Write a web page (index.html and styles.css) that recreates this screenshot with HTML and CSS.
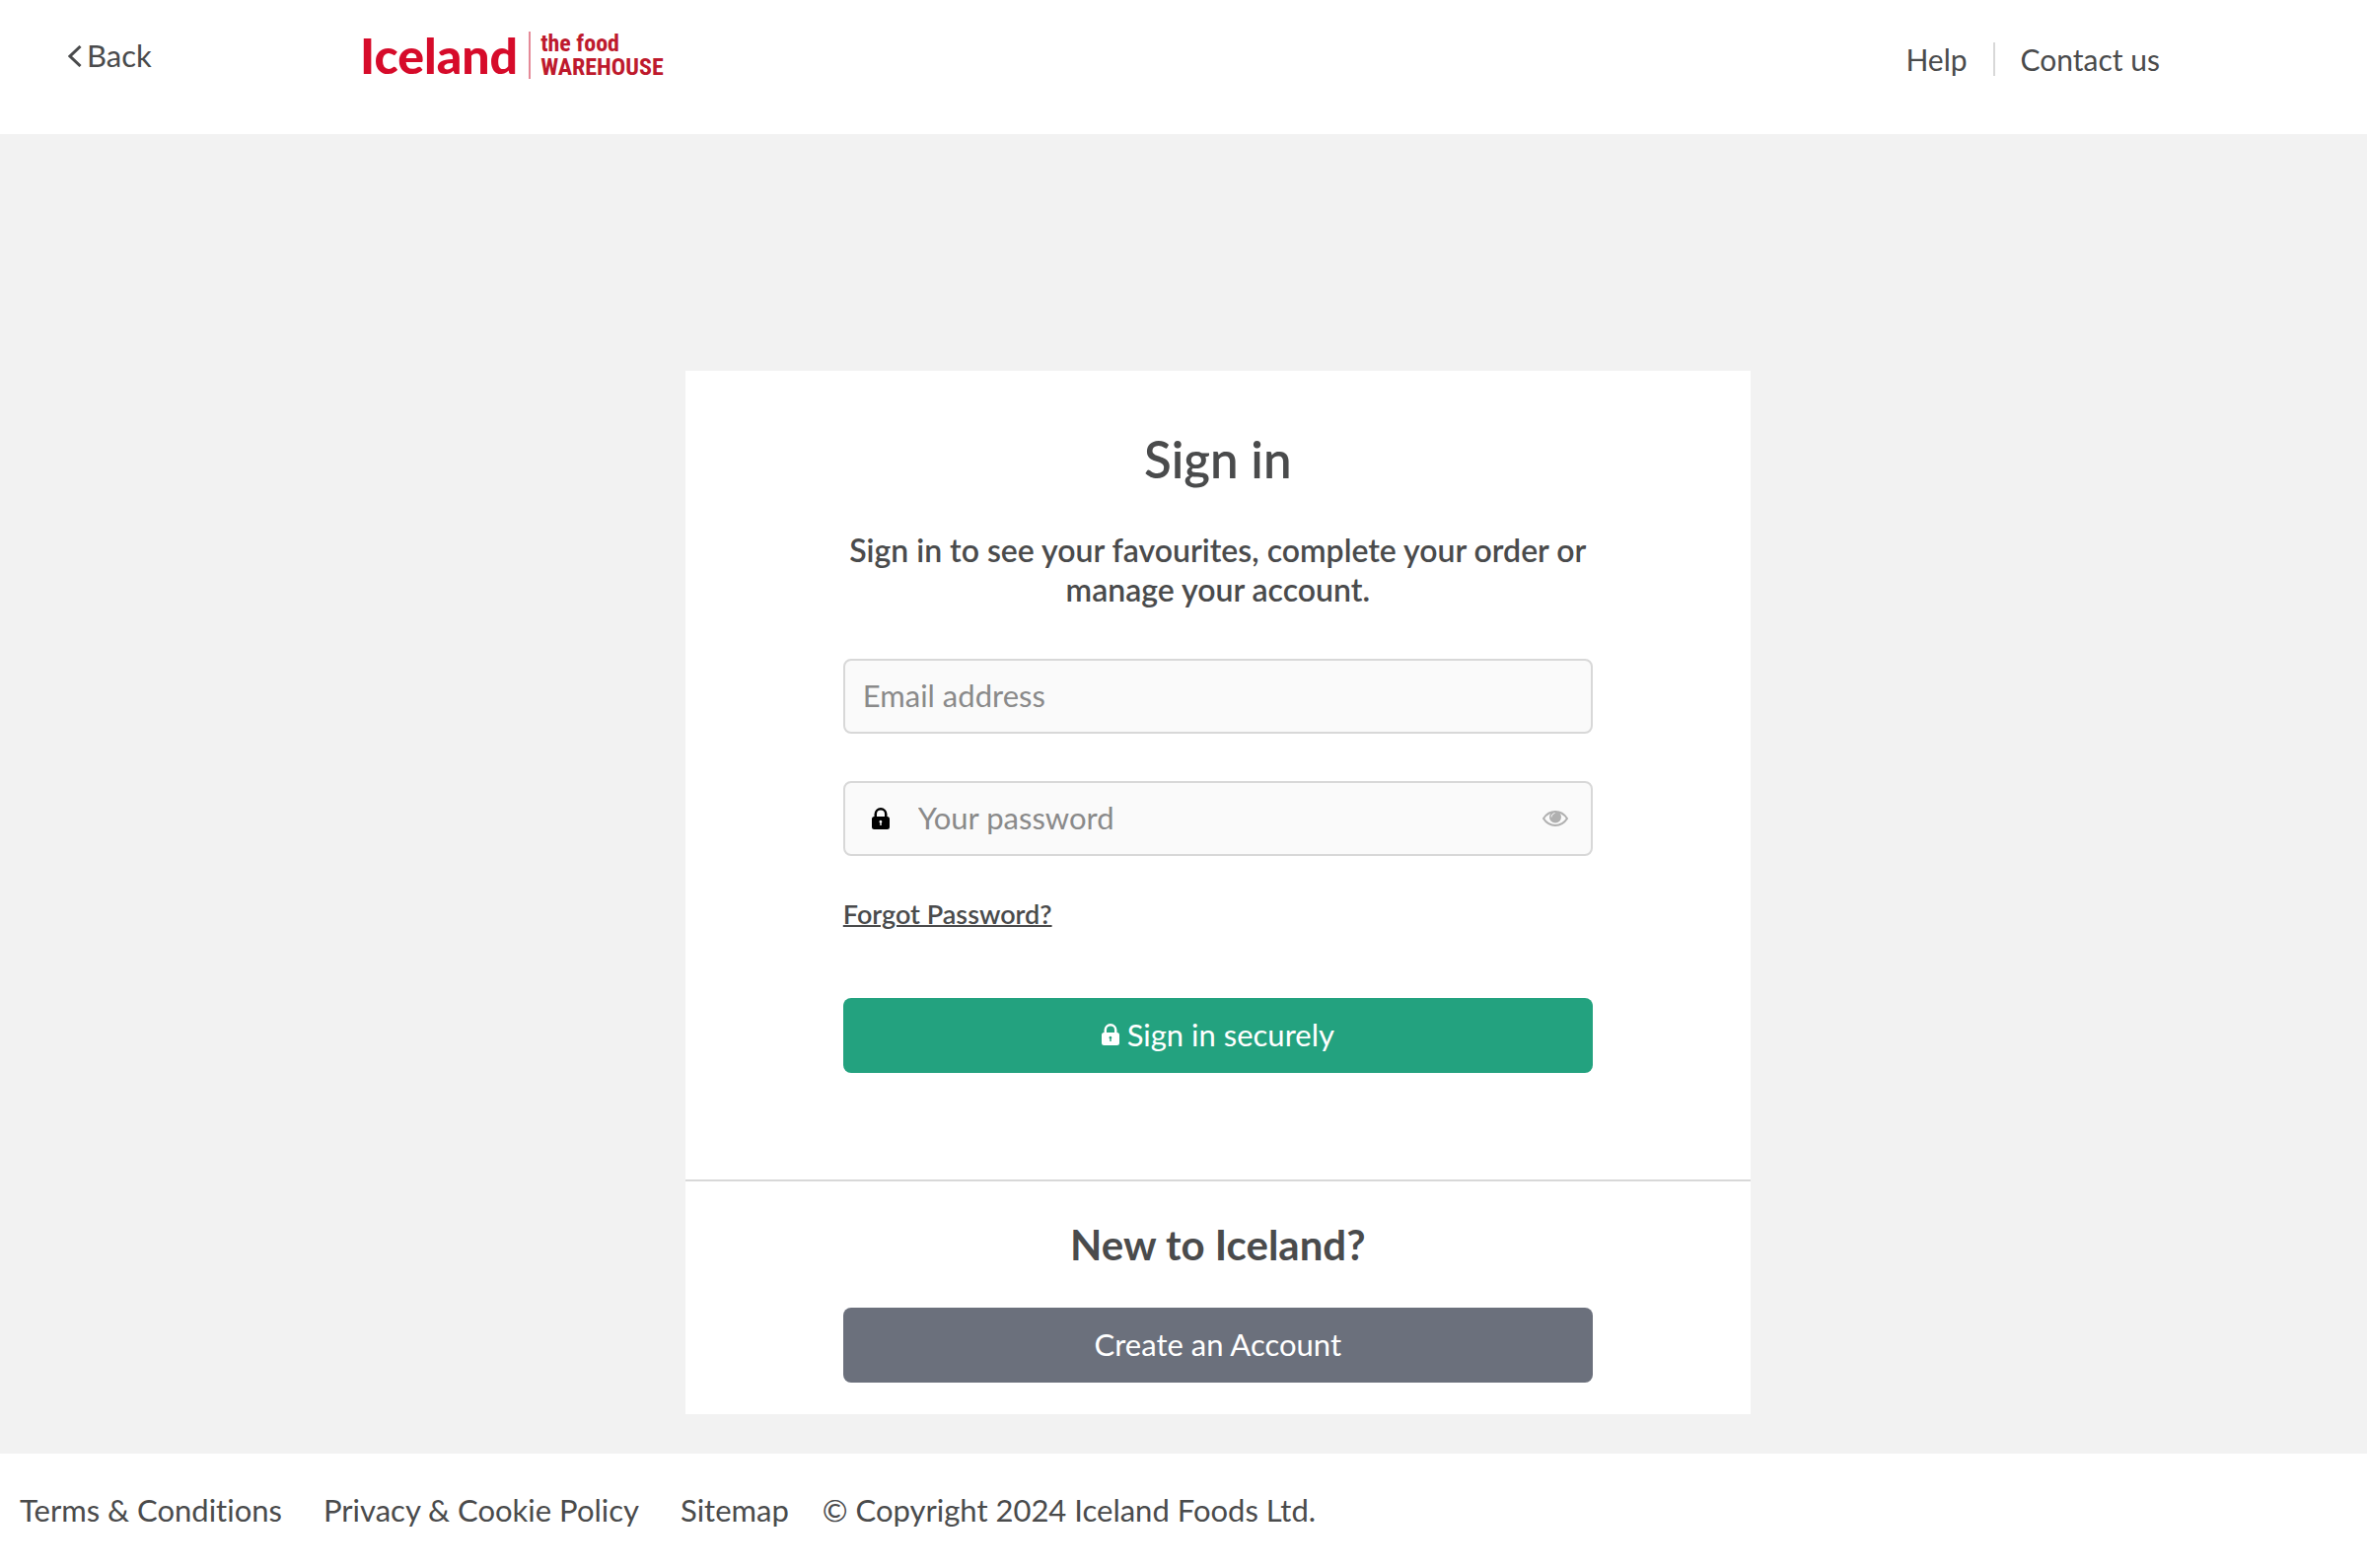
FILE: index.html
```html
<!DOCTYPE html>
<html lang="en">
<head>
  <meta charset="utf-8">
  <meta name="viewport" content="width=device-width, initial-scale=1">
  <title>Sign in | Iceland</title>
  <link rel="stylesheet" href="styles.css">
</head>
<body>
  <header class="header">
    <a class="back" href="#">
      <svg class="back-icon" viewBox="0 0 14 22" aria-hidden="true"><path d="M12.500 1 2 11l10.500 10"/></svg>
      <span>Back</span>
    </a>
    <a class="logo" href="#">
      <span class="logo-main">Iceland</span>
      <span class="logo-sub"><span>the food</span><span>WAREHOUSE</span></span>
    </a>
    <nav class="header-links">
      <a href="#">Help</a>
      <a href="#">Contact us</a>
    </nav>
  </header>

  <main class="main">
    <div class="card">
      <form class="signin">
        <h1 class="title">Sign in</h1>
        <p class="intro">Sign in to see your favourites, complete your order or manage your account.</p>
        <div class="field">
          <input class="input" type="email" placeholder="Email address" aria-label="Email address">
        </div>
        <div class="field">
          <svg class="lock" viewBox="0 0 18 22" aria-hidden="true"><path fill-rule="evenodd" d="M2.500 9V6.500a6.500 6.500 0 0 1 13 0V9A2.500 2.500 0 0 1 18 11.500v8a2.500 2.500 0 0 1-2.500 2.500h-13A2.500 2.500 0 0 1 0 19.500v-8A2.500 2.500 0 0 1 2.500 9zM5 9h8V6.500a4 4 0 0 0-8 0zM7.500 14.200c0 .6.300 1 .8 1.200V18h1.400v-2.600a1.400 1.400 0 1 0-2.200-1.200z"/></svg>
          <input class="input" type="password" placeholder="Your password" aria-label="Your password">
          <button class="reveal" type="button" aria-label="Show password">
            <svg class="eye" viewBox="0 0 26 16" aria-hidden="true"><path class="eye-line" d="M1 8C7-1.300 19-1.300 25 8 19 17.300 7 17.300 1 8z"/><circle cx="13" cy="6.500" r="6"/><path class="eye-glint" d="M9 6.500c.2-2 1.500-3.500 3.500-4"/></svg>
          </button>
        </div>
        <a class="forgot" href="#">Forgot Password?</a>
        <button class="button button-primary" type="submit">
          <svg class="lock" viewBox="0 0 18 22" aria-hidden="true"><path fill-rule="evenodd" d="M2.500 9V6.500a6.500 6.500 0 0 1 13 0V9A2.500 2.500 0 0 1 18 11.500v8a2.500 2.500 0 0 1-2.500 2.500h-13A2.500 2.500 0 0 1 0 19.500v-8A2.500 2.500 0 0 1 2.500 9zM5 9h8V6.500a4 4 0 0 0-8 0zM7.500 14.200c0 .6.300 1 .8 1.200V18h1.400v-2.600a1.400 1.400 0 1 0-2.200-1.200z"/></svg>
          <span>Sign in securely</span>
        </button>
      </form>
      <section class="register">
        <h2 class="subtitle">New to Iceland?</h2>
        <button class="button button-secondary" type="button">Create an Account</button>
      </section>
    </div>
  </main>

  <footer class="footer">
    <a href="#">Terms &amp; Conditions</a>
    <a href="#">Privacy &amp; Cookie Policy</a>
    <a href="#">Sitemap</a>
    <span class="copyright">© Copyright 2024 Iceland Foods Ltd.</span>
  </footer>
</body>
</html>
```
FILE: styles.css
```css
*, *::before, *::after { box-sizing: border-box; }

body {
  margin: 0;
  background: #fff;
  color: #4a4b4c;
  font: 400 31px/40px Lato, "Open Sans", sans-serif;
  font-variant-ligatures: none;
}

a { color: inherit; text-decoration: none; }
h1, h2, p { margin: 0; }

.header {
  display: flex;
  align-items: flex-start;
  height: 136px;
  padding: 32px 210px 0 69px;
}

.back {
  display: flex;
  align-items: center;
  gap: 5px;
  width: 296px;
  padding-top: 4px;
}
.back span { padding-bottom: 2px; }
.back-icon {
  width: 14px;
  height: 22px;
  fill: none;
  stroke: #4a4b4c;
  stroke-width: 3;
}

.logo {
  display: flex;
  align-items: center;
  gap: 11px;
  height: 48px;
  color: #d60b2a;
}
.logo-main {
  font-size: 50px;
  font-weight: 900;
  line-height: 48px;
}
.logo-sub {
  display: flex;
  flex-direction: column;
  padding-left: 10px;
  border-left: 2px solid #e58a98;
  color: #be1a2d;
  font: 700 24px/24px "Roboto Condensed", Roboto, sans-serif;
}

.header-links {
  display: flex;
  align-items: center;
  margin-left: auto;
  padding-top: 11px;
  font-size: 30px;
  line-height: 34px;
}
.header-links a + a {
  margin-left: 26px;
  padding-left: 26px;
  border-left: 2px solid #d8d8d8;
}

.main {
  padding: 240px 0 40px;
  background: #f2f2f2;
}
.card {
  width: 45%;
  margin-left: 28.95%;
  background: #fff;
}
.signin {
  display: flex;
  flex-direction: column;
  padding: 58px 160px 108px;
}
.title {
  font-size: 51px;
  font-weight: 600;
  line-height: 64px;
  text-align: center;
}
.intro {
  margin: 40px 0 50px;
  font-size: 32px;
  font-weight: 600;
  text-align: center;
}

.field {
  display: flex;
  align-items: center;
  height: 76px;
  margin-bottom: 48px;
  padding: 0 18px;
  border: 2px solid #d8d8d8;
  border-radius: 8px;
  background: #fafafa;
}
.input {
  flex: 1;
  min-width: 0;
  padding: 0 0 2px;
  border: 0;
  outline: 0;
  background: none;
  color: inherit;
  font: inherit;
}
.input::placeholder { color: #8a8a8a; opacity: 1; }
.lock {
  flex: none;
  width: 18px;
  height: 22px;
  fill: currentColor;
}
.field .lock { margin: 0 29px 0 9px; color: #000; }
.reveal {
  display: flex;
  padding: 0;
  margin-right: 5px;
  border: 0;
  background: none;
}
.eye { width: 26px; height: 16px; fill: #b0b0b0; }
.eye-line { fill: none; stroke: #b0b0b0; stroke-width: 2; }
.eye-glint { fill: none; stroke: #fafafa; stroke-width: 1; }

.forgot {
  align-self: flex-start;
  margin: -9px 0 65px;
  font-size: 27px;
  font-weight: 600;
  text-decoration: underline;
  text-decoration-thickness: 2px;
}

.button {
  display: flex;
  align-items: center;
  justify-content: center;
  gap: 8px;
  width: 100%;
  height: 76px;
  padding: 0 0 2px;
  border: 0;
  border-radius: 8px;
  color: #fff;
  font: inherit;
}
.button-primary { background: #23a27f; }
.button-secondary { background: #6b707c; }

.register {
  padding: 40px 160px 32px;
  border-top: 2px solid #d8d8d8;
}
.subtitle {
  margin-bottom: 40px;
  font-size: 42px;
  line-height: 48px;
  text-align: center;
}

.footer {
  display: flex;
  gap: 42px;
  padding: 37px 20px;
}
.copyright { margin-left: -8px; }
```
